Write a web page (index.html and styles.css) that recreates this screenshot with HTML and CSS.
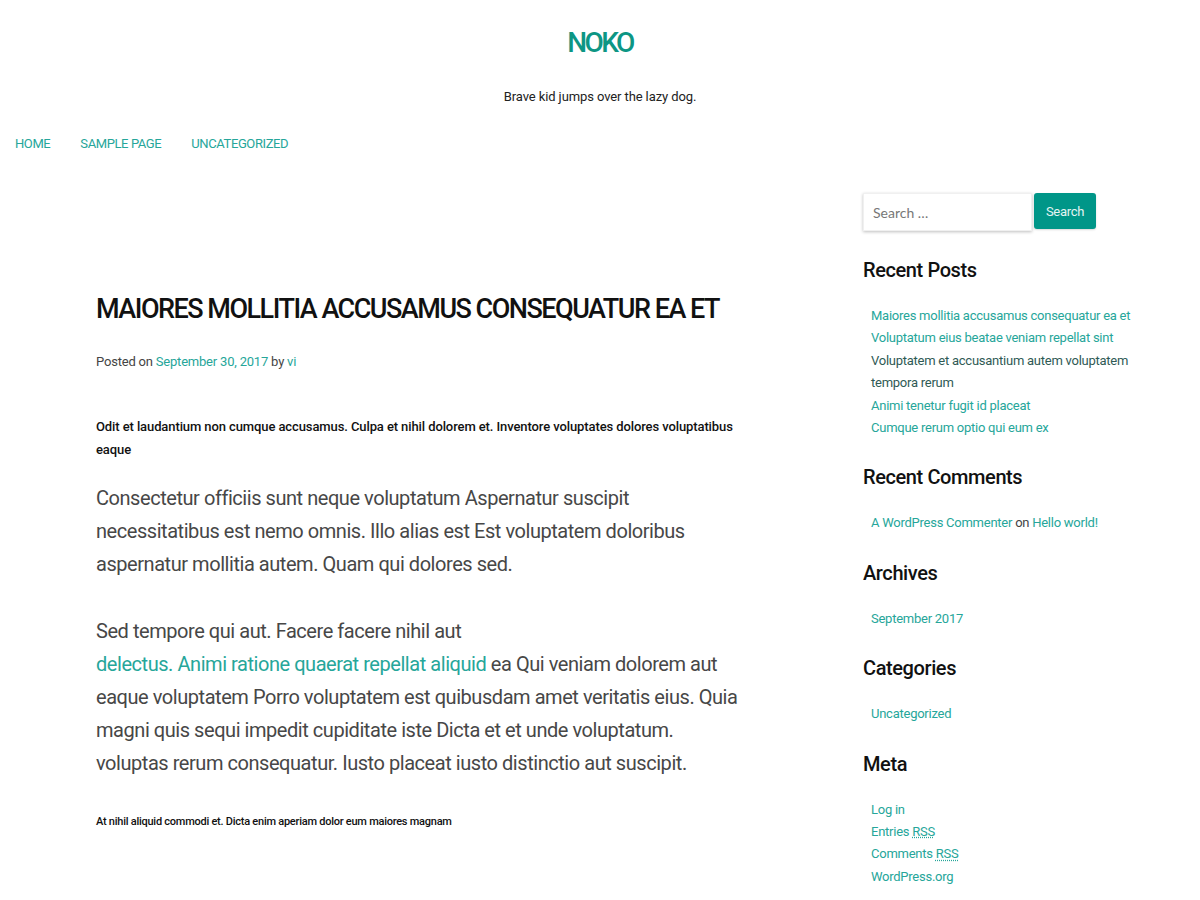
FILE: index.html
```html
<!DOCTYPE html>
<html lang="en">
<head>
<meta charset="utf-8">
<title>NOKO</title>
<link rel="stylesheet" href="styles.css">
</head>
<body>
<header class="site-header">
  <h1 class="site-title"><a href="#">NOKO</a></h1>
  <p class="site-description">Brave kid jumps over the lazy dog.</p>
</header>
<nav class="main-nav">
  <a href="#">HOME</a>
  <a href="#">SAMPLE PAGE</a>
  <a href="#">UNCATEGORIZED</a>
</nav>
<div class="page">
  <main class="content">
    <article class="post">
      <h2 class="entry-title">MAIORES MOLLITIA ACCUSAMUS CONSEQUATUR EA ET</h2>
      <div class="entry-meta">Posted on <a href="#">September 30, 2017</a> by <a href="#">vi</a></div>
      <p class="lead-bold">Odit et laudantium non cumque accusamus. Culpa et nihil dolorem et. Inventore voluptates dolores voluptatibus eaque</p>
      <p class="big">Consectetur officiis sunt neque voluptatum Aspernatur suscipit necessitatibus est nemo omnis. Illo alias est Est voluptatem doloribus aspernatur mollitia autem. Quam qui dolores sed.</p>
      <p class="big">Sed tempore qui aut. Facere facere nihil aut<br><a href="#">delectus. Animi ratione quaerat repellat aliquid</a> ea Qui veniam dolorem aut eaque voluptatem Porro voluptatem est quibusdam amet veritatis eius. Quia magni quis sequi impedit cupiditate iste Dicta et et unde voluptatum. voluptas rerum consequatur. Iusto placeat iusto distinctio aut suscipit.</p>
      <p class="small-bold">At nihil aliquid commodi et. Dicta enim aperiam dolor eum maiores magnam</p>
    </article>
  </main>
  <aside class="sidebar">
    <form class="search-form">
      <input class="search-field" type="search" placeholder="Search …">
      <button class="search-submit" type="button">Search</button>
    </form>
    <section class="widget">
      <h3 class="widget-title">Recent Posts</h3>
      <ul>
        <li><a href="#">Maiores mollitia accusamus consequatur ea et</a></li>
        <li><a href="#">Voluptatum eius beatae veniam repellat sint</a></li>
        <li><a href="#" class="visited">Voluptatem et accusantium autem voluptatem tempora rerum</a></li>
        <li><a href="#">Animi tenetur fugit id placeat</a></li>
        <li><a href="#">Cumque rerum optio qui eum ex</a></li>
      </ul>
    </section>
    <section class="widget">
      <h3 class="widget-title">Recent Comments</h3>
      <ul>
        <li><a href="#">A WordPress Commenter</a> on <a href="#">Hello world!</a></li>
      </ul>
    </section>
    <section class="widget">
      <h3 class="widget-title">Archives</h3>
      <ul>
        <li><a href="#">September 2017</a></li>
      </ul>
    </section>
    <section class="widget">
      <h3 class="widget-title">Categories</h3>
      <ul>
        <li><a href="#">Uncategorized</a></li>
      </ul>
    </section>
    <section class="widget">
      <h3 class="widget-title">Meta</h3>
      <ul>
        <li><a href="#">Log in</a></li>
        <li><a href="#">Entries <abbr title="Really Simple Syndication">RSS</abbr></a></li>
        <li><a href="#">Comments <abbr title="Really Simple Syndication">RSS</abbr></a></li>
        <li><a href="#">WordPress.org</a></li>
      </ul>
    </section>
  </aside>
</div>
</body>
</html>
```

FILE: styles.css
```css
* { box-sizing: border-box; }

body {
  margin: 0;
  background: #fff;
  color: #404040;
  font-family: "Roboto", "Liberation Sans", sans-serif;
  font-size: 13px;
  line-height: 1.6;
}

a { color: #26a69a; text-decoration: none; }

.site-header {
  text-align: center;
  padding-top: 24px;
}

.site-title {
  margin: 0;
  font-size: 28px;
  line-height: 38px;
  font-weight: 500;
  letter-spacing: -2.5px;
}
.site-title a { color: #0d9684; }

.site-description {
  margin: 24px 0 0;
  font-size: 13px;
  line-height: 22px;
  letter-spacing: -0.1px;
  color: #222;
}

.main-nav {
  display: flex;
  gap: 30px;
  padding: 25px 15px 0;
  font-size: 13px;
  line-height: 22px;
  letter-spacing: -0.4px;
}
.main-nav a { color: #26a69a; }

.page {
  display: flex;
  padding: 38px 0 0 96px;
}

.content {
  width: 650px;
  padding-top: 96px;
}

.entry-title {
  margin: 0;
  font-size: 27px;
  line-height: 40px;
  font-weight: 500;
  letter-spacing: -1.5px;
  color: #111;
}

.entry-meta {
  margin-top: 22px;
  font-size: 13px;
  line-height: 22px;
  letter-spacing: -0.2px;
  color: #444;
}

.lead-bold {
  margin: 42px 0 0;
  font-size: 13px;
  line-height: 23px;
  font-weight: 500;
  letter-spacing: -0.1px;
  color: #111;
}

.big {
  margin: 21px 0 0;
  font-size: 20px;
  line-height: 33px;
  letter-spacing: -0.45px;
  color: #474747;
}
.big + .big { margin-top: 34px; }

.small-bold {
  margin: 32px 0 0;
  font-size: 11px;
  line-height: 20px;
  font-weight: 500;
  letter-spacing: -0.25px;
  color: #111;
}

.sidebar {
  margin-left: 117px;
  width: 280px;
}

.search-form {
  display: flex;
  align-items: flex-start;
  gap: 2px;
}

.search-field {
  width: 169px;
  height: 38px;
  border: 1px solid #f0f0f0;
  box-shadow: 0 1px 3px rgba(0,0,0,0.25);
  padding: 0 9px;
  font-family: "Lato", sans-serif;
  font-size: 14px;
  color: #333;
  outline: none;
}
.search-field::placeholder { color: #777; }

.search-submit {
  width: 62px;
  height: 36px;
  padding: 0;
  border: none;
  border-radius: 3px;
  background: #009688;
  color: #e6f4f2;
  font-family: inherit;
  font-size: 13px;
  letter-spacing: -0.3px;
  box-shadow: 0 1px 2px rgba(0,0,0,0.15);
}

.widget { margin-top: 23px; }
.search-form + .widget { margin-top: 24px; }

.widget-title {
  margin: 0;
  font-size: 20px;
  line-height: 30px;
  font-weight: 500;
  letter-spacing: -0.4px;
  color: #111;
}

.widget ul {
  list-style: none;
  margin: 20px 0 0;
  padding: 0 0 0 8px;
}
.widget li {
  font-size: 13px;
  line-height: 22.4px;
  letter-spacing: -0.25px;
  color: #444;
}
.widget a.visited { color: #2f5a55; }

abbr[title] {
  text-decoration: underline dotted;
}
```
